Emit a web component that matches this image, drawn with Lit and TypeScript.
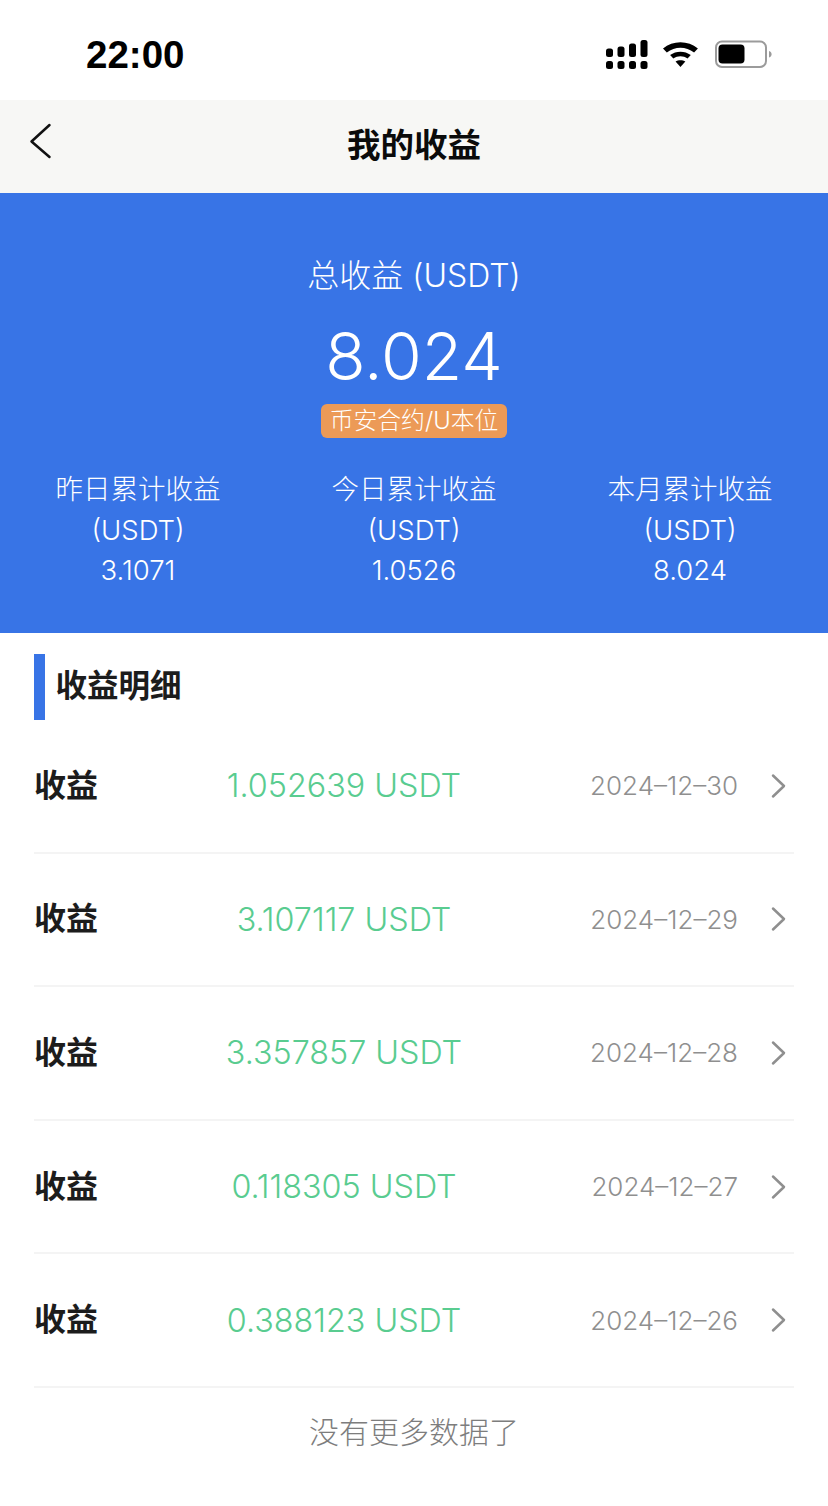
import { LitElement, html, css, svg } from "lit";
import { customElement } from "lit/decorators.js";

const rows = [
  ["1.052639 USDT", "2024-12-30"],
  ["3.107117 USDT", "2024-12-29"],
  ["3.357857 USDT", "2024-12-28"],
  ["0.118305 USDT", "2024-12-27"],
  ["0.388123 USDT", "2024-12-26"],
];
const stats = [
  ["昨日累计收益", "3.1071"],
  ["今日累计收益", "1.0526"],
  ["本月累计收益", "8.024"],
];
const bars: [number, number][] = [
  [0, 8.5],
  [11.5, 6.5],
  [23, 3.5],
  [34.5, 0],
];

@customElement("app-root")
export class AppRoot extends LitElement {
  static styles = css`
    :host {
      display: block;
      width: 828px;
      height: 1506px;
      overflow: hidden;
      background: #fff;
      font-family: "Inter", "Liberation Sans", "Noto Sans CJK SC", sans-serif;
      color: #1c1c1c;
    }
    .status {
      height: 100px;
      display: flex;
      align-items: center;
      justify-content: space-between;
      padding: 10px 54px 0 86px;
      box-sizing: border-box;
      background: #fff;
    }
    .time {
      font-family: "Liberation Sans", sans-serif;
      font-size: 38.5px;
      font-weight: 700;
      color: #000;
      line-height: 1;
    }
    .icons { display: block; margin-top: 4px; }
    .nav {
      height: 93px;
      box-sizing: border-box;
      padding-bottom: 8px;
      background: #f7f7f5;
      display: flex;
      align-items: center;
      justify-content: center;
      position: relative;
    }
    .back { position: absolute; left: 28px; top: 22px; }
    .nav-title {
      font-size: 33.5px;
      font-weight: 700;
      color: #0b0b0b;
      font-family: "Noto Sans CJK SC", sans-serif;
    }
    .hero {
      height: 440px;
      background: #3874e6;
      color: #fff;
      display: flex;
      flex-direction: column;
      align-items: center;
      box-sizing: border-box;
      padding-top: 62px;
    }
    .hero-title { font-size: 32px; font-weight: 300; line-height: 42px; }
    .total { font-size: 66px; font-weight: 300; line-height: 80px; margin-top: 19px; }
    .tag {
      margin-top: 8px;
      height: 34px;
      line-height: 34px;
      padding: 0 9px;
      border-radius: 6px;
      background: #ec9a57;
      font-size: 23.8px;
      font-weight: 300;
      color: #fff;
    }
    .stats {
      width: 100%;
      display: grid;
      grid-template-columns: repeat(3, 276px);
      margin-top: 31px;
      text-align: center;
      font-size: 27.5px;
      font-weight: 300;
      line-height: 40.5px;
    }
    .section {
      height: 66px;
      margin: 21px 0 0 34px;
      display: flex;
      align-items: center;
      gap: 10.5px;
    }
    .section i { display: block; width: 11px; height: 66px; background: #3874e6; }
    .section span {
      font-size: 31.5px;
      font-weight: 700;
      padding-bottom: 8px;
      font-family: "Noto Sans CJK SC", sans-serif;
    }
    .list { margin: 0 34px; }
    .row {
      height: 133.6px;
      box-sizing: border-box;
      border-bottom: 2px solid #f4f4f4;
      display: grid;
      grid-template-columns: 96px 428px 180px 1fr;
      align-items: center;
    }
    .label {
      font-size: 32px;
      font-weight: 700;
      padding-bottom: 6px;
      font-family: "Noto Sans CJK SC", sans-serif;
    }
    .amount { text-align: center; font-size: 32.3px; font-weight: 300; color: #59cc90; }
    .date { text-align: right; font-size: 26px; font-weight: 300; color: #8f8f8f; }
    .chev { justify-self: start; margin-left: 32px; display: block; }
    .more { text-align: center; font-size: 30px; font-weight: 300; color: #7d7d7d; line-height: 40px; margin-top: 24px; }
  `;

  render() {
    return html`
      <div class="status">
        <span class="time">22:00</span>
        <svg class="icons" width="168" height="34" viewBox="0 0 168 34">
          ${bars.map(
            ([x, y]) => svg`
              <rect x="${x}" y="21" width="7" height="8" rx="2.5" fill="#000"/>
              <rect x="${x}" y="${y}" width="7" height="${17 - y}" rx="2.5" fill="#000"/>`
          )}
          <g transform="translate(-7.3 -2) scale(1.09 1)">
            <path d="M59 10.5 C68 2 82 2 91 10.5 L87.5 14.5 C80 8 70 8 62.5 14.5 Z" fill="#000"/>
            <path d="M65.5 17 C71 12.5 79 12.5 84.5 17 L81.5 20.5 C77.5 17.6 72.5 17.6 68.5 20.5 Z" fill="#000"/>
            <path d="M75 29 L70.5 23.5 C73 21.7 77 21.7 79.5 23.5 Z" fill="#000"/>
          </g>
          <rect x="110" y="1.5" width="50" height="25.5" rx="6" fill="none" stroke="#9b9b9b" stroke-width="2"/>
          <rect x="112.500" y="4.500" width="26" height="19" rx="4" fill="#000"/>
          <path d="M163 11 C166.5 12 166.5 16.500 163 17.500 Z" fill="#9b9b9b"/>
        </svg>
      </div>
      <div class="nav">
        <svg class="back" width="26" height="40" viewBox="0 0 26 40">
          <path d="M21.5 3 L3.5 19.5 L21.5 35" fill="none" stroke="#111" stroke-width="2.5" stroke-linecap="round" stroke-linejoin="round"/>
        </svg>
        <span class="nav-title">我的收益</span>
      </div>
      <div class="hero">
        <div class="hero-title">总收益 (USDT)</div>
        <div class="total">8.024</div>
        <div class="tag">币安合约/U本位</div>
        <div class="stats">
          ${stats.map(([t, v]) => html`<div><div>${t}</div><div>(USDT)</div><div>${v}</div></div>`)}
        </div>
      </div>
      <div class="section"><i></i><span>收益明细</span></div>
      <div class="list">
        ${rows.map(
          ([a, d]) => html`<div class="row">
            <span class="label">收益</span>
            <span class="amount">${a}</span>
            <span class="date">${d.replace(/-/g, "–")}</span>
            <svg class="chev" width="18" height="26" viewBox="0 0 18 26">
              <path d="M3 2.5 L14 13 L3 23.5" fill="none" stroke="#8f8f8f" stroke-width="2.5" stroke-linecap="round" stroke-linejoin="round"/>
            </svg>
          </div>`
        )}
      </div>
      <div class="more">没有更多数据了</div>
    `;
  }
}
